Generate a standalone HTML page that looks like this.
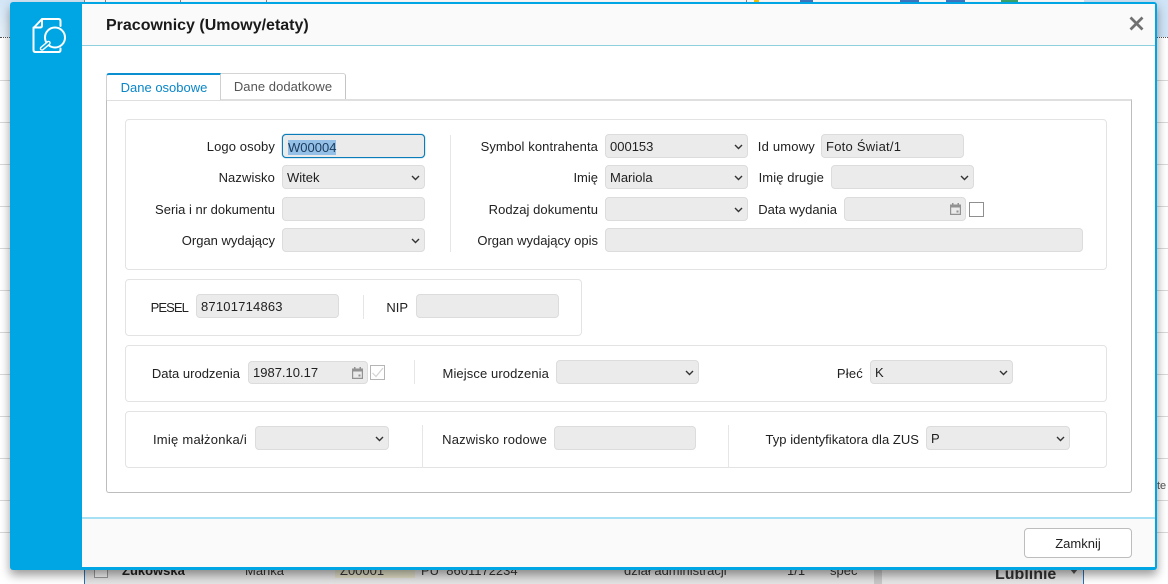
<!DOCTYPE html>
<html lang="pl"><head><meta charset="utf-8"><title>Pracownicy</title>
<style>
html,body{margin:0;padding:0;width:1168px;height:584px;overflow:hidden;background:#fff}
body{font-family:"Liberation Sans",Arial,sans-serif;font-size:13px;color:#212121;position:relative}
.a{position:absolute;box-sizing:border-box}
.l{position:absolute;white-space:nowrap;text-align:right;height:16px;line-height:16px;margin-top:1px;transform:translateX(-100%)}
.f{position:absolute;box-sizing:border-box;background:#ebebeb;border:1px solid #dcdcdc;border-radius:4px;height:24px;line-height:24px;padding-left:4px;white-space:nowrap}
.f svg.c{position:absolute;right:4px;top:9px}
.f svg.d{position:absolute;right:4px;top:5px}
.g{position:absolute;box-sizing:border-box;border:1px solid #e3e3e3;border-radius:4px;background:#fff}
.s{position:absolute;width:1px;background:#e6e6e6}
.bl{position:absolute;left:0;width:10px;height:1px;background:#d8d8d8}
.br{position:absolute;left:1157px;width:11px;height:1px;background:#d8d8d8}
</style></head><body>
<!-- background page -->
<div class="a" style="left:0;top:0;width:84px;height:37px;background:linear-gradient(#d3e6f6,#e6f0f9)"></div>
<div class="a" style="left:0;top:37px;width:84px;border-top:1px dotted #555"></div>
<div class="a" style="left:1084px;top:0;width:84px;height:37px;background:#cfe4f7"></div>
<div class="a" style="left:1157px;top:37px;width:11px;border-top:1px dotted #555"></div>
<div class="bl" style="top:80px"></div><div class="bl" style="top:122px"></div><div class="bl" style="top:164px"></div><div class="bl" style="top:206px"></div><div class="bl" style="top:248px"></div><div class="bl" style="top:290px"></div><div class="bl" style="top:332px"></div><div class="bl" style="top:374px"></div><div class="bl" style="top:416px"></div><div class="bl" style="top:458px"></div><div class="bl" style="top:500px"></div><div class="bl" style="top:532px"></div>
<div class="br" style="top:80px"></div><div class="br" style="top:122px"></div><div class="br" style="top:164px"></div><div class="br" style="top:206px"></div><div class="br" style="top:248px"></div><div class="br" style="top:290px"></div><div class="br" style="top:332px"></div><div class="br" style="top:374px"></div><div class="br" style="top:416px"></div><div class="br" style="top:458px"></div><div class="br" style="top:500px"></div><div class="br" style="top:532px"></div>
<div class="a" style="left:1157px;top:479px;font-size:11px;line-height:14px;color:#555">te</div>
<!-- top strip of background -->
<div class="a" style="left:84px;top:0;width:1000px;height:3px;background:#fff"></div>
<div class="a" style="left:84px;top:0;width:1px;height:3px;background:#888"></div>
<div class="a" style="left:105px;top:0;width:1px;height:3px;background:#888"></div>
<div class="a" style="left:180px;top:0;width:1px;height:3px;background:#888"></div>
<div class="a" style="left:266px;top:0;width:1px;height:3px;background:#888"></div>
<div class="a" style="left:746px;top:0;width:1px;height:3px;background:#888"></div>
<div class="a" style="left:754px;top:0;width:5px;height:3px;background:#f6c40c"></div>
<div class="a" style="left:800px;top:0;width:13px;height:3px;background:#3f79c5"></div>
<div class="a" style="left:900px;top:0;width:19px;height:3px;background:#3f79c5"></div>
<div class="a" style="left:946px;top:0;width:19px;height:3px;background:#3f79c5"></div>
<div class="a" style="left:1001px;top:0;width:17px;height:3px;background:#3aa76d"></div>
<!-- bottom of background -->
<div class="a" style="left:84px;top:566px;width:790px;height:18px;background:#e3e3e3;border-left:1px solid #2a72b5"></div>
<div class="a" style="left:94px;top:565px;width:14px;height:13px;background:#f2f2f2;border:1px solid #999"></div>
<div class="a" style="left:122px;top:564px;font-weight:bold;line-height:14px;color:#222">Żukowska</div>
<div class="a" style="left:245px;top:564px;line-height:14px;color:#333">Marika</div>
<div class="a" style="left:335px;top:564px;width:80px;height:14px;background:#dfdcc4"></div>
<div class="a" style="left:340px;top:564px;line-height:14px;color:#333">Z00001</div>
<div class="a" style="left:421px;top:564px;line-height:14px;color:#333">PU&nbsp; 8601172234</div>
<div class="a" style="left:624px;top:564px;line-height:14px;color:#333">dział administracji</div>
<div class="a" style="left:787px;top:564px;line-height:14px;color:#333">1/1</div>
<div class="a" style="left:830px;top:564px;line-height:14px;color:#333">spec</div>
<div class="a" style="left:874px;top:566px;width:8px;height:18px;background:#c8c8c8"></div>
<div class="a" style="left:882px;top:566px;width:202px;height:18px;background:#e6e6e6;border-right:1px solid #2a72b5"></div>
<div class="a" style="left:995px;top:565px;font-size:16px;font-weight:bold;line-height:20px;color:#333">Lublinie</div>
<svg class="a" style="left:1069px;top:569px" width="10" height="6" viewBox="0 0 10 6"><path d="M1 0H9L5 5Z" fill="#555"/></svg>
<!-- modal -->
<div class="a" style="left:10px;top:2px;width:1147px;height:568px;background:#00a6e4;border-radius:3px;box-shadow:0 5px 10px rgba(0,0,0,.4)"></div>
<div class="a" style="left:82px;top:4px;width:1073px;height:563px;background:#fff"></div>
<div class="a" style="left:82px;top:4px;width:1073px;height:42px;background:#fafafa;border-bottom:1px solid #8ed0dd"></div>
<div class="a" style="left:82px;top:517px;width:1073px;height:50px;background:#fafafa;border-top:2px solid #a6e0f5"></div>
<div class="a" style="left:106px;top:16px;font-size:16px;font-weight:bold;line-height:20px;color:#1a1a1a;white-space:nowrap">Pracownicy (Umowy/etaty)</div>
<svg class="a" style="left:1128px;top:15px" width="17" height="17" viewBox="0 0 17 17"><path d="M2.5 2.5L14.5 14.5M14.5 2.5L2.5 14.5" stroke="#707070" stroke-width="2.7" fill="none"/></svg>
<!-- sidebar icon -->
<svg class="a" style="left:32px;top:17px" width="36" height="38" viewBox="0 0 36 38" fill="none" stroke="#fff" stroke-width="2" stroke-linecap="round" stroke-linejoin="round">
<path d="M10 2H26.5Q28.5 2 28.5 4V9M28.5 31.5V33Q28.5 35 26.5 35H3.5Q1.5 35 1.5 33V11L10 2V8.500Q10 10.500 8 10.500H1.500"/>
<circle cx="23" cy="20.500" r="10"/>
<path d="M16.500 26L10 31.500" stroke-width="4.500"/>
<path d="M16.500 26L10 31.500" stroke="#00a6e4" stroke-width="1.800"/>
</svg>
<!-- tabs -->
<div class="a" style="left:106px;top:99px;width:1026px;height:394px;border:1px solid #bdbdbd;border-top:2px solid #dfdfdf;border-radius:0 0 3px 3px;background:#fff"></div>
<div class="a" style="left:106px;top:73px;width:115px;height:27px;background:#fff;border-left:1px solid #d0d0d0;border-right:1px solid #d0d0d0;border-top:2px solid #0a8fd0;border-radius:3px 0 0 0;text-align:center;line-height:25px;color:#0a86c8;padding-left:1px">Dane osobowe</div>
<div class="a" style="left:221px;top:73px;width:125px;height:26px;background:#fff;border-right:1px solid #c4c4c4;border-top:1px solid #d4d4d4;border-radius:0 3px 0 0;text-align:center;line-height:26px;color:#555;letter-spacing:.05px">Dane dodatkowe</div>
<!-- groups -->
<div class="g" style="left:125px;top:119px;width:982px;height:151px"></div>
<div class="g" style="left:125px;top:279px;width:457px;height:57px"></div>
<div class="g" style="left:125px;top:345px;width:982px;height:57px"></div>
<div class="g" style="left:125px;top:411px;width:982px;height:57px"></div>
<div class="s" style="left:450px;top:135px;height:117px"></div>
<div class="s" style="left:363px;top:295px;height:24px"></div>
<div class="s" style="left:414px;top:360px;height:24px"></div>
<div class="s" style="left:422px;top:425px;height:43px"></div>
<div class="s" style="left:728px;top:425px;height:43px"></div>
<!-- row 1 -->
<div class="l" style="left:275px;top:138px;letter-spacing:.1px">Logo osoby</div>
<div class="f" style="left:282px;top:134px;width:143px;border:1px solid #0a7cb8;box-shadow:0 0 1px #0a7cb8;padding-left:5px"><span style="background:#94c0e8;color:#1a3b5c;display:inline-block;line-height:15px;vertical-align:middle">W00004</span></div>
<div class="l" style="left:275px;top:169px;letter-spacing:.1px">Nazwisko</div>
<div class="f" style="left:282px;top:165px;width:143px">Witek<svg class="c" width="9" height="6" viewBox="0 0 9 6"><path d="M1 1L4.500 4.500L8 1" stroke="#333" stroke-width="1.400" fill="none"/></svg></div>
<div class="l" style="left:275px;top:201px">Seria i nr dokumentu</div>
<div class="f" style="left:282px;top:197px;width:143px"></div>
<div class="l" style="left:275px;top:232px">Organ wydający</div>
<div class="f" style="left:282px;top:228px;width:143px"><svg class="c" width="9" height="6" viewBox="0 0 9 6"><path d="M1 1L4.500 4.500L8 1" stroke="#333" stroke-width="1.400" fill="none"/></svg></div>
<div class="l" style="left:598px;top:138px;letter-spacing:.1px">Symbol kontrahenta</div>
<div class="f" style="left:605px;top:134px;width:143px">000153<svg class="c" width="9" height="6" viewBox="0 0 9 6"><path d="M1 1L4.500 4.500L8 1" stroke="#333" stroke-width="1.400" fill="none"/></svg></div>
<div class="l" style="left:598px;top:169px">Imię</div>
<div class="f" style="left:605px;top:165px;width:143px">Mariola<svg class="c" width="9" height="6" viewBox="0 0 9 6"><path d="M1 1L4.500 4.500L8 1" stroke="#333" stroke-width="1.400" fill="none"/></svg></div>
<div class="l" style="left:598px;top:201px;letter-spacing:.06px">Rodzaj dokumentu</div>
<div class="f" style="left:605px;top:197px;width:143px"><svg class="c" width="9" height="6" viewBox="0 0 9 6"><path d="M1 1L4.500 4.500L8 1" stroke="#333" stroke-width="1.400" fill="none"/></svg></div>
<div class="l" style="left:598px;top:232px">Organ wydający opis</div>
<div class="f" style="left:605px;top:228px;width:478px"></div>
<div class="l" style="left:815px;top:138px;letter-spacing:.2px">Id umowy</div>
<div class="f" style="left:821px;top:134px;width:143px;letter-spacing:.25px">Foto Świat/1</div>
<div class="l" style="left:824px;top:169px;letter-spacing:.1px">Imię drugie</div>
<div class="f" style="left:831px;top:165px;width:143px"><svg class="c" width="9" height="6" viewBox="0 0 9 6"><path d="M1 1L4.500 4.500L8 1" stroke="#333" stroke-width="1.400" fill="none"/></svg></div>
<div class="l" style="left:837px;top:201px">Data wydania</div>
<div class="f" style="left:844px;top:197px;width:122px"><svg class="d" width="11" height="12" viewBox="0 0 11 12"><path d="M.6 2.500H10.400V11.400H.6Z" fill="none" stroke="#929292" stroke-width="1.200"/><path d="M0 1.500H11V4.500H0Z" fill="#929292"/><rect x="2" y="0" width="1.500" height="2" fill="#929292"/><rect x="7.500" y="0" width="1.500" height="2" fill="#929292"/><rect x="6.500" y="7.500" width="2" height="2" fill="#929292"/></svg></div>
<div class="a" style="left:969px;top:202px;width:15px;height:15px;border:1px solid #8f8f8f;background:#fff"></div>
<!-- row 2 -->
<div class="l" style="left:188px;top:299px;letter-spacing:-.9px">PESEL</div>
<div class="f" style="left:196px;top:294px;width:143px;letter-spacing:.2px">87101714863</div>
<div class="l" style="left:408px;top:299px">NIP</div>
<div class="f" style="left:416px;top:294px;width:143px"></div>
<!-- row 3 -->
<div class="l" style="left:240px;top:365px">Data urodzenia</div>
<div class="f" style="left:248px;top:361px;width:120px;height:23px;line-height:22px">1987.10.17<svg class="d" width="11" height="12" viewBox="0 0 11 12"><path d="M.6 2.500H10.400V11.400H.6Z" fill="none" stroke="#929292" stroke-width="1.200"/><path d="M0 1.500H11V4.500H0Z" fill="#929292"/><rect x="2" y="0" width="1.500" height="2" fill="#929292"/><rect x="7.500" y="0" width="1.500" height="2" fill="#929292"/><rect x="6.500" y="7.500" width="2" height="2" fill="#929292"/></svg></div>
<div class="a" style="left:370px;top:365px;width:15px;height:15px;border:1px solid #b5b5b5;background:#fff"></div>
<svg class="a" style="left:371px;top:366px" width="13" height="13" viewBox="0 0 13 13"><path d="M1.500 7L5 10.500L12 2" stroke="#d2d2d2" stroke-width="1.200" fill="none"/></svg>
<div class="l" style="left:549px;top:365px;letter-spacing:.1px">Miejsce urodzenia</div>
<div class="f" style="left:556px;top:360px;width:143px"><svg class="c" width="9" height="6" viewBox="0 0 9 6"><path d="M1 1L4.500 4.500L8 1" stroke="#333" stroke-width="1.400" fill="none"/></svg></div>
<div class="l" style="left:863px;top:365px;letter-spacing:.2px">Płeć</div>
<div class="f" style="left:870px;top:360px;width:143px">K<svg class="c" width="9" height="6" viewBox="0 0 9 6"><path d="M1 1L4.500 4.500L8 1" stroke="#333" stroke-width="1.400" fill="none"/></svg></div>
<!-- row 4 -->
<div class="l" style="left:247px;top:431px;letter-spacing:.25px">Imię małżonka/i</div>
<div class="f" style="left:255px;top:426px;width:134px"><svg class="c" width="9" height="6" viewBox="0 0 9 6"><path d="M1 1L4.500 4.500L8 1" stroke="#333" stroke-width="1.400" fill="none"/></svg></div>
<div class="l" style="left:547px;top:431px;letter-spacing:.2px">Nazwisko rodowe</div>
<div class="f" style="left:554px;top:426px;width:142px"></div>
<div class="l" style="left:919px;top:431px;letter-spacing:.04px">Typ identyfikatora dla ZUS</div>
<div class="f" style="left:926px;top:426px;width:144px">P<svg class="c" width="9" height="6" viewBox="0 0 9 6"><path d="M1 1L4.500 4.500L8 1" stroke="#333" stroke-width="1.400" fill="none"/></svg></div>
<!-- footer button -->
<div class="a" style="left:1024px;top:528px;width:108px;height:30px;background:#fff;border:1px solid #bdbdbd;border-radius:4px;text-align:center;line-height:29px;color:#222">Zamknij</div>
</body></html>
